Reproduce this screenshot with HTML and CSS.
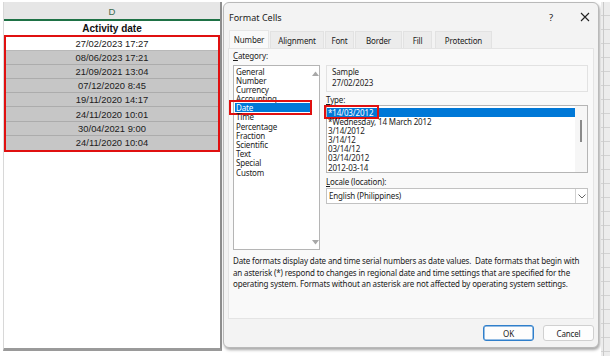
FILE: index.html
```html
<!DOCTYPE html>
<html>
<head>
<meta charset="utf-8">
<link rel="stylesheet" href="styles.css">
</head>
<body>
<div class="screen">
  <div class="sheet">
    <div class="colhead">D</div>
    <div class="hdr">Activity date</div>
    <div class="sel">
      <div class="row active">27/02/2023 17:27</div>
      <div class="row">08/06/2023 17:21</div>
      <div class="row">21/09/2021 13:04</div>
      <div class="row">07/12/2020 8:45</div>
      <div class="row">19/11/2020 14:17</div>
      <div class="row">24/11/2020 10:01</div>
      <div class="row">30/04/2021 9:00</div>
      <div class="row">24/11/2020 10:04</div>
    </div>
    <div class="rest"></div>
  </div>

  <div class="dialog">
    <div class="titlebar">
      <span class="title">Format Cells</span>
      <span class="help">?</span>
      <span class="close">
        <svg width="10" height="10" viewBox="0 0 10 10"><path d="M1 1L9 9M9 1L1 9" stroke="#222" stroke-width="1.1" fill="none"/></svg>
      </span>
    </div>
    <div class="tabs">
      <span class="tab on t-num">Number</span>
      <span class="tab t-align">Alignment</span>
      <span class="tab t-font">Font</span>
      <span class="tab t-border">Border</span>
      <span class="tab t-fill">Fill</span>
      <span class="tab t-prot">Protection</span>
    </div>
    <div class="panel">
      <div class="cols">
        <div class="catcol">
          <div class="lbl"><u>C</u>ategory:</div>
          <div class="catlist">
            <div class="items">
              <div>General</div>
              <div>Number</div>
              <div>Currency</div>
              <div>Accounting</div>
              <div class="pick mark-date">Date</div>
              <div>Time</div>
              <div>Percentage</div>
              <div>Fraction</div>
              <div>Scientific</div>
              <div>Text</div>
              <div>Special</div>
              <div>Custom</div>
            </div>
            <div class="vscroll">
              <svg width="7" height="5" viewBox="0 0 7 5"><path d="M0 5L3.5 0.5L7 5Z" fill="#a8a8a8"/></svg>
              <svg width="7" height="5" viewBox="0 0 7 5"><path d="M0 0L3.5 4.5L7 0Z" fill="#a8a8a8"/></svg>
            </div>
          </div>
        </div>
        <div class="rightcol">
          <div class="sample">
            <div class="slbl">Sample</div>
            <div class="sval">27/02/2023</div>
          </div>
          <div class="lbl tlbl"><u>T</u>ype:</div>
          <div class="typelist">
            <div class="items">
              <div class="pick"><span class="mark-type">*14/03/2012</span></div>
              <div>*Wednesday, 14 March 2012</div>
              <div>3/14/2012</div>
              <div>3/14/12</div>
              <div>03/14/12</div>
              <div>03/14/2012</div>
              <div>2012-03-14</div>
            </div>
            <div class="tscroll"><div class="thumb"></div></div>
          </div>
          <div class="lbl llbl"><u>L</u>ocale (location):</div>
          <div class="dropdown">
            <span class="dval">English (Philippines)</span>
            <span class="darrow">
              <svg width="8" height="5" viewBox="0 0 8 5"><path d="M0.5 0.5L4 4L7.5 0.5" stroke="#555" stroke-width="0.9" fill="none"/></svg>
            </span>
          </div>
        </div>
      </div>
      <p class="desc">Date formats display date and time serial numbers as date values.&nbsp; Date formats that begin with an asterisk (*) respond to changes in regional date and time settings that are specified for the operating system. Formats without an asterisk are not affected by operating system settings.</p>
    </div>
    <div class="buttons">
      <span class="btn ok">OK</span>
      <span class="btn">Cancel</span>
    </div>
  </div>

  <div class="grid"></div>
</div>
</body>
</html>
```

FILE: styles.css
```css
* { box-sizing: border-box; }
html, body { margin: 0; padding: 0; }
body {
  width: 610px;
  height: 356px;
  overflow: hidden;
  background: #ffffff;
  font-family: "Noto Sans", "Open Sans", sans-serif;
  color: #1a1a1a;
}
.screen {
  display: flex;
  align-items: flex-start;
  height: 356px;
  padding: 2px 0 0 3px;
}

/* spreadsheet */
.sheet {
  width: 219px;
  height: 349px;
  display: flex;
  flex-direction: column;
  border-left: 1px solid #d8d8d8;
  border-right: 2px solid #8e8e8e;
  border-bottom: 3px solid #9a9a9a;
  background: #fff;
  font-family: "Liberation Sans", Arial, sans-serif;
  font-size: 9.4px;
}
.colhead {
  height: 19px;
  background: #e6e6e6;
  border-bottom: 2px solid #1e7145;
  color: #3d6b4e;
  font-size: 9.5px;
  display: flex;
  align-items: center;
  justify-content: center;
  padding-top: 1px;
}
.hdr {
  height: 14px;
  font-weight: bold;
  font-size: 10px;
  display: flex;
  align-items: center;
  justify-content: center;
  color: #111;
}
.sel {
  border: 2px solid #e01010;
  width: 216px;
  background: #c6c6c6;
}
.row {
  height: 14.1px;
  display: flex;
  align-items: center;
  justify-content: center;
  border-bottom: 1px solid #acacac;
  color: #202020;
}
.row:last-child { border-bottom: none; }
.row.active { background: #fff; border-bottom: 1px solid #b8b8b8; }
.rest { flex: 1; }

/* dialog */
.dialog {
  width: 376px;
  height: 346px;
  margin-left: 1px;
  background: #f3f3f3;
  border: 1px solid #b9b9b9;
  border-radius: 6px;
  box-shadow: 1px 2px 3px rgba(0,0,0,0.35);
  display: flex;
  flex-direction: column;
  font-size: 8px;
  letter-spacing: -0.15px;
  color: #1b1b1b;
}
.titlebar {
  height: 28px;
  display: flex;
  align-items: center;
  padding: 0 0 0 5px;
}
.title { font-size: 9px; flex: 1; letter-spacing: 0; }
.help { font-size: 9.5px; width: 14px; text-align: center; margin-right: 14px; }
.close { width: 26px; display: flex; align-items: center; justify-content: center; }
.tabs {
  display: flex;
  height: 17px;
  padding-left: 5px;
  align-items: flex-end;
}
.tab {
  height: 17px;
  display: flex;
  align-items: center;
  justify-content: center;
  background: #ececec;
  border: 1px solid #e2e2e2;
  border-bottom: none;
  margin-right: 1px;
  font-size: 8px;
}
.t-num { width: 40px; }
.t-align { width: 54px; }
.t-font { width: 29px; }
.t-border { width: 47px; }
.t-fill { width: 29px; margin-right: 3px; }
.t-prot { width: 57px; }
.tab.on { background: #f9f9f9; border-color: #e6e6e6; height: 18px; }
.panel {
  margin: 0 4px 0 4px;
  height: 271px;
  background: #f9f9f9;
  border: 1px solid #e4e4e4;
  padding: 1px 0 0 4px;
  display: flex;
  flex-direction: column;
}
.cols { display: flex; }
.catcol { width: 92px; }
.lbl { height: 11px; line-height: 11px; font-size: 8px; }
.lbl u { text-decoration: underline; }
.catlist {
  margin-top: 4px;
  width: 87px;
  height: 185px;
  background: #fff;
  border: 1px solid #b5b5b5;
  display: flex;
}
.items { flex: 1; padding: 0 0 0 1px; }
.items div { height: 9.2px; line-height: 9.2px; padding-left: 1px; white-space: nowrap; position: relative; }
.catlist .items { padding-top: 0.5px; }
.pick { background: #0078d7; color: #fff; }
.mark-date::after {
  content: "";
  position: absolute;
  left: -6px; right: -1px; top: -3px; bottom: -3px;
  border: 2px solid #e01010;
}
.mark-type { position: relative; display: inline-block; height: 9.2px; line-height: 9.2px; }
.mark-type::after {
  content: "";
  position: absolute;
  left: -4px; right: -6px; top: -2.5px; bottom: -2.5px;
  border: 2px solid #e01010;
}
.vscroll {
  width: 8px;
  display: flex;
  flex-direction: column;
  justify-content: space-between;
  align-items: center;
  padding: 5px 0 4px;
}
.rightcol { width: 262px; margin-left: 1px; padding-top: 15px; }
.sample {
  height: 27px;
  border: 1px solid #e2e2e2;
  padding: 0 0 0 5px;
}
.slbl { height: 11px; line-height: 11px; }
.sval { height: 12px; line-height: 12px; }
.tlbl { margin-top: 3px; height: 10px; line-height: 10px; }
.typelist {
  margin-top: 0;
  height: 68px;
  background: #fff;
  border: 1px solid #b5b5b5;
  display: flex;
}
.typelist .items { padding-top: 1.5px; padding-left: 0; }
.tscroll {
  width: 12px;
  background: #f6f6f6;
  display: flex;
  justify-content: center;
  padding-top: 14px;
}
.thumb { width: 2px; height: 22px; background: #8a8a8a; }
.llbl { margin-top: 3px; }
.dropdown {
  margin-top: 1px;
  height: 16px;
  background: #fff;
  border: 1px solid #c2c2c2;
  display: flex;
  align-items: stretch;
}
.dval { flex: 1; padding-left: 2px; line-height: 14px; }
.darrow {
  width: 12px;
  border-left: 1px solid #d2d2d2;
  display: flex;
  align-items: center;
  justify-content: center;
}
.desc {
  margin: 5px 0 0 0;
  padding-right: 3px;
  line-height: 11.5px;
  font-size: 8px;
}
.buttons {
  display: flex;
  justify-content: flex-end;
  padding: 6px 4px 0 0;
  gap: 9px;
}
.btn {
  width: 51px;
  height: 16px;
  background: #fdfdfd;
  border: 1px solid #d0d0d0;
  border-radius: 3px;
  display: flex;
  align-items: center;
  justify-content: center;
  font-size: 8px;
}
.btn.ok { border: 1px solid #2f7fcb; box-shadow: inset 0 0 0 0.5px #2f7fcb; }

/* background sheet to the right */
.grid {
  flex: 1;
  height: 354px;
  margin-left: 2px;
  background-color: #ececec;
  background-image:
    linear-gradient(to right, transparent 2px, #c9c9c9 2px, #c9c9c9 3px, transparent 3px),
    repeating-linear-gradient(to bottom, transparent 0, transparent 13px, #d2d2d2 13px, #d2d2d2 14px);
}
```
